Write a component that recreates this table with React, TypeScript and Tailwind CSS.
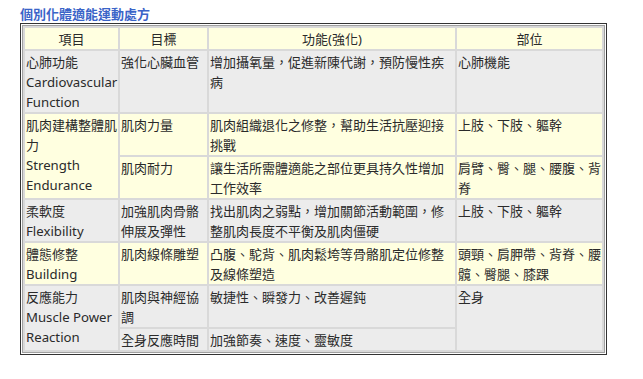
const FONT = { fontFamily: '"Noto Sans", "Noto Sans CJK TC", sans-serif' }

const GRAY = 'bg-[#ececec]'
const YELLOW = 'bg-[#ffffe0]'

const td = 'align-top pl-[1px] pr-0 pt-[1px] pb-0 leading-[20px]'
const th = 'font-normal leading-[20px] pt-[1px] pb-0 text-center'

function En({ children }: { children: string }) {
  return <span className="text-[13.2px]">{children}</span>
}

export default function App() {
  return (
    <div className="w-[643px] h-[379px] bg-white text-[13px] text-[#2a2a2a]" style={FONT}>
      <h1 className="pl-[20px] pt-[6px] h-[23px] text-[13px] leading-[16px] font-bold text-[#3a64c8]">
        個別化體適能運動處方
      </h1>
      <div className="ml-[20px] w-[587px] border border-[#333] bg-white p-px">
        <table className="w-full table-fixed border-separate border-spacing-[2px] border border-[#a0a0a0] bg-[#d9d9d9]">
          <colgroup>
            <col className="w-[93px]" />
            <col className="w-[87px]" />
            <col className="w-[246px]" />
            <col />
          </colgroup>
          <thead>
            <tr className={YELLOW}>
              <th className={th}>項目</th>
              <th className={th}>目標</th>
              <th className={th}>功能(強化)</th>
              <th className={th}>部位</th>
            </tr>
          </thead>
          <tbody>
            <tr className={GRAY}>
              <td className={td}>心肺功能<br /><En>Cardiovascular</En><br /><En>Function</En></td>
              <td className={td}>強化心臟血管</td>
              <td className={td}>增加攝氧量，促進新陳代謝，預防慢性疾病</td>
              <td className={td}>心肺機能</td>
            </tr>
            <tr className={YELLOW}>
              <td className={td} rowSpan={2}>肌肉建構整體肌力<br /><En>Strength Endurance</En></td>
              <td className={td}>肌肉力量</td>
              <td className={td}>肌肉組織退化之修整，幫助生活抗壓迎接挑戰</td>
              <td className={td}>上肢、下肢、軀幹</td>
            </tr>
            <tr className={YELLOW}>
              <td className={td}>肌肉耐力</td>
              <td className={td}>讓生活所需體適能之部位更具持久性增加工作效率</td>
              <td className={td}>肩臂、臀、腿、腰腹、背脊</td>
            </tr>
            <tr className={GRAY}>
              <td className={td}>柔軟度<br /><En>Flexibility</En></td>
              <td className={td}>加強肌肉骨骼伸展及彈性</td>
              <td className={td}>找出肌肉之弱點，增加關節活動範圍，修整肌肉長度不平衡及肌肉僵硬</td>
              <td className={td}>上肢、下肢、軀幹</td>
            </tr>
            <tr className={YELLOW}>
              <td className={td}>體態修整<br /><En>Building</En></td>
              <td className={td}>肌肉線條雕塑</td>
              <td className={td}>凸腹、駝背、肌肉鬆垮等骨骼肌定位修整及線條塑造</td>
              <td className={td}>頭頸、肩胛帶、背脊、腰髖、臀腿、膝踝</td>
            </tr>
            <tr className={GRAY}>
              <td className={td} rowSpan={2}>反應能力<br /><En>Muscle Power Reaction</En></td>
              <td className={td}>肌肉與神經協調</td>
              <td className={td}>敏捷性、瞬發力、改善遲鈍</td>
              <td className={td} rowSpan={2}>全身</td>
            </tr>
            <tr className={GRAY}>
              <td className={td}>全身反應時間</td>
              <td className={td}>加強節奏、速度、靈敏度</td>
            </tr>
          </tbody>
        </table>
      </div>
    </div>
  )
}
